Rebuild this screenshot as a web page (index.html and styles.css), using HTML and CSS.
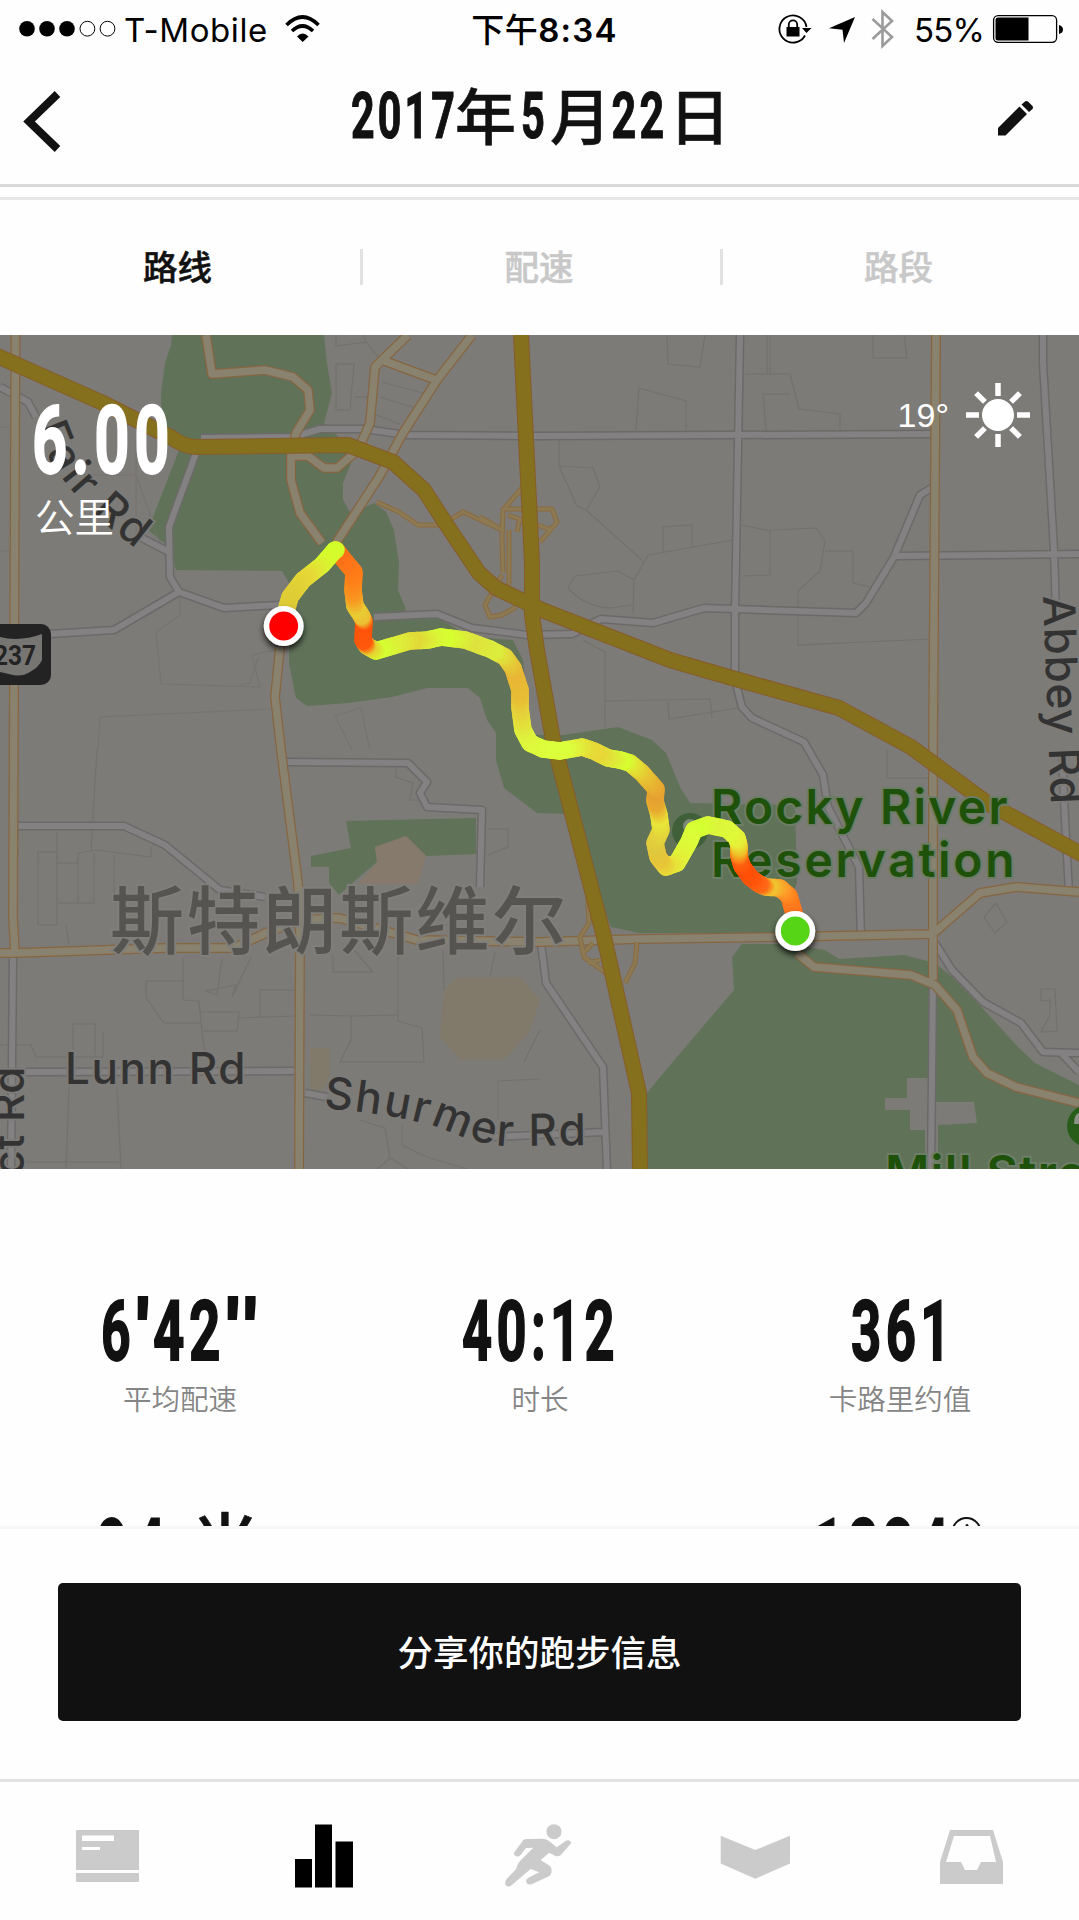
FILE: index.html
```html
<!DOCTYPE html>
<html lang="zh-CN">
<head>
<meta charset="utf-8">
<title>2017年5月22日</title>
<link rel="stylesheet" href="styles.css">
</head>
<body>
<div class="app">
  <header class="top">
    <div class="status">
      <div class="status-left">
        <svg class="signal" viewBox="18 20 98 18"><g><circle cx="27" cy="28.7" r="7.8"/><circle cx="47" cy="28.7" r="7.8"/><circle cx="67" cy="28.7" r="7.8"/></g><g fill="none" stroke="#000"><circle cx="87.4" cy="28.7" r="7.4"/><circle cx="107.5" cy="28.7" r="7.4"/></g></svg>
        <span class="carrier">T-Mobile</span>
        <svg class="wifi" viewBox="284 14 37 29"><g fill="none" stroke="#000" stroke-width="3.6"><path d="M286.500 25Q302.500 9 318.500 25"/><path d="M292 31Q302.500 21 313 31"/></g><path d="M297 36.500Q302.500 30.500 308.500 36.500L302.700 42z"/></svg>
      </div>
      <div class="clock">下午<b>8:34</b></div>
      <div class="status-right">
        <svg class="status-icons" viewBox="778 8 118 42">
          <g fill="none" stroke="#000" stroke-width="1.8"><path d="M805 35.500A13.600 13.600 0 1 1 806.500 27"/><path d="M788.800 28v-3.500a4.200 4.200 0 0 1 8.400 0V28"/></g>
          <path d="M786.500 27h13v9.500h-13zM802 28h9.500L806.500 33z"/>
          <path d="M855 17L829 28.300L842.500 29.800L844 43z"/>
          <path d="M872.500 19L892 37L882.500 46V12L892 21L872.500 39" fill="none" stroke="#9b9b9b" stroke-width="2.600"/>
        </svg>
        <span class="percent">55%</span>
        <svg class="battery" viewBox="992 14 73 30"><rect x="993.600" y="15.700" width="63" height="26.600" rx="4.500" fill="none" stroke="#000" stroke-width="1.300"/><path d="M998 17.500h30.500v23H998q-2.500 0-2.500-2.500V20q0-2.500 2.500-2.500zM1059 25q4 1 4 4.500t-4 4.500z"/></svg>
      </div>
    </div>
    <div class="titlebar">
      <svg class="back" viewBox="20 88 46 66"><path d="M57.500 94L29 121.500L57.500 149" fill="none" stroke="#111" stroke-width="8"/></svg>
      <svg class="title" viewBox="340 80 400 74">
        <g class="num small"><text x="351" y="138" textLength="107" lengthAdjust="spacingAndGlyphs" font-size="65">2017</text><text x="521" y="138" textLength="27" lengthAdjust="spacingAndGlyphs" font-size="65">5</text><text x="611.500" y="138" textLength="56" lengthAdjust="spacingAndGlyphs" font-size="65">22</text></g>
        <g class="cjk" font-size="61"><text x="455" y="140">年</text><text x="550" y="140">月</text><text x="669" y="140">日</text></g>
      </svg>
      <svg class="edit" viewBox="994 98 42 40"><path d="M998 135.500v-7.500L1019.500 106.500L1027 114L1005.500 135.500zM1021.500 104.500L1025 101.500q1.500-1 3 0L1032.500 106q1 1.500 0 3L1029 112z" fill="#111"/></svg>
    </div>
  </header>
  <nav class="tabs">
    <a class="tab active">路线</a>
    <a class="tab">配速</a>
    <a class="tab">路段</a>
  </nav>
  <section class="map">
    <svg class="map-canvas" viewBox="0 335 1079 835">
      <g fill="#607359">
        <path d="M172 335L171 345L165 363L161 393L162 427L179 450L148 530L169 547L176 570L282 571L289 583L289 663L296 698L307 706L348 703L392 697L427 688L468 688L480 698L487 720L496 733L496 760L504 788L537 813L566 814L611 927L639 933H775L797 883L795 805L690 803L680 787L666 753L652 740L618 727L563 735L530 735L523 660L513 640L472 637L437 618H406L405 607L398 590L399 563L394 530L386 512L374 503L351 514L343 500V483L355 453L324 423L332 393L327 363L324 335z"/>
        <path d="M346 821L476 818V854L426 856L406 836L375 847L377 862L358 878L339 895L329 883V867H311V856L351 848z"/>
        <path d="M742 944L732 957L734 990L660 1077L647 1093V1170H1079V1085L1035 1063L1018 1047L987 1013L952 977L935 963L904 955L839 959L825 950L790 944z"/>
      </g>
      <path fill="#7d7b77" d="M907 1078H930V1102H974L977 1123L938 1125V1170H925V1130H910V1110H885V1098H907z"/>
      <path fill="#857a6b" d="M406 836L426 856L418 884H358L377 862L375 847z"/>
      <path fill="#817969" d="M456 978L520 977L540 1000L529 1033L503 1060H461L440 1037L444 990zM310 1048H330V1075L322 1090H310z"/>
      <g class="plots">
        <path d="M336 335V346L366 342L364 335M336 364H354L350 410H336zM366 342L378 357M382 382L430 395M380 397L415 408M376 415L400 424M354 397H368"/>
        <path d="M0 427H15M0 551H15M136 440V545M75 475H136L180 600V615L156 632L161 684L260 687L252 655L282 648M258 658L250 683L236 686M98 750L100 717L270 709M335 716L361 708L370 750M335 716L352 750" opacity=".7"/>
        <path d="M667 335L668 364L700 367L705 335M636 430L639 388L686 401V430M767 335V374M770 335V374M745 374H790L799 409L840 414V430M790 394H763L766 430M873 335V358H907L904 335M559 440V466L577 506L586 510L600 487L593 468L559 466M586 510L643 561M742 525L770 531V575L742 576M770 530L816 528L825 541L820 571L798 591V645L930 639M825 551H853V583L870 587M633 613L634 580L648 555L733 540M663 551V527L692 525V547M632 605L611 608Q585 607 568 588L575 576L618 571L634 580M583 640L605 652V727M605 701L710 699L712 718M668 702L669 719L738 708M887 750V778H933"/>
        <path d="M97 750L91 850M57 832V925H38V852H57M57 863H78V853L97 850L151 857V847M78 863V903M94 853V903H57M114 855V903M69 945L66 925M183 958V1000M146 998V981H183M146 998L164 1023H201L199 1001L183 1000M200 1012H239L237 1031H203M201 1023L205 1055M0 1045H31L36 1057H103V1032M73 1050V1024H95V1055M260 1016V990H295M237 1018L295 1016M222 958L217 995L206 991L236 985L232 997L251 957M69 1087L66 1170M117 1087L121 1170M26 1162H121M398 950V1021L422 1028L424 1062H340L351 1040V1016L310 1015M351 1016L398 1015M333 955V972H373L354 950M443 950L444 990M495 952L490 977M488 829H508V847L488 855M497 1081L540 1079M498 1082V1120M524 1062L540 1030M360 1120L385 1128L390 1158L376 1170M402 1125V1145L427 1157L470 1170M390 1158L410 1170M396 765V777L413 783L410 800H425"/>
        <path d="M996 903L984 917L995 933L1007 922zM1041 989H1055L1057 1031L1041 1032L1050 1015V1000L1041 1001z"/>
      </g>
      <defs>
        <path id="gray" d="M0 387L28 402L36 417M140 537L169 552M196 453L169 527L170 577L179 592L224 608L279 605M179 592L114 630L50 634M201 438L293 437L320 429H365L406 435L540 436L938 434M374 617L437 614L472 628L527 635L572 634L601 619L653 623L704 608L856 613L866 603L894 557L920 495L935 486M894 556L1079 554M740 335L735 613V680L742 707L752 718L804 742L823 775L828 807L859 867L861 938M1043 335V363L1054 550L1056 613M1062 750L1064 800L1069 893M287 762L408 763L427 782L420 793L427 807L482 810L480 887M17 826H124L165 845L220 890L265 897M13 957L11 1170M26 1072L294 1071M305 1093L327 1097M490 1137L604 1132M541 943L546 983L603 1067L607 1170M935 943L952 970L983 1002L1021 1023L1043 1052L1079 1053M1061 1053L1079 1072M933 980L931 1170"/>
        <path id="beige" d="M15.500 335L13 917L15 953M0 953H15L165 948H234L268 932L300 920L339 918L389 932L417 940L540 942L639 939L780 937L931 934M206 335L212 374L265 370L293 377L308 390L310 410L296 433L291 453V480L300 513L322 543M291 456H308L324 468H337L358 450L370 423L375 367L382 360L408 335M382 360L436 380M472 335L437 380L403 433L379 477L336 543M280 647L275 697L281 750L298 883L300 935L299 1170M936 335L933 750V980M935 932L980 893L1016 887L1079 892M797 953L814 967L911 975L935 985L957 1010L973 1057L987 1073L1016 1087L1079 1103"/>
        <path id="ramp" d="M377 502L399 512L418 525H441L463 512L502 530M480 517L502 530M522 488L503 510L502 540L503 573M509 530L509 585M503 509H552L557 522L540 542M552 530L508 515M517 532L520 518M502 575L485 605L490 617L502 615L516 607M587 883L589 923L580 937L584 957L606 973M637 942L635 963L625 983M584 952L593 943M600 960L588 963"/>
        <path id="highway" d="M-5 355L103 403L172 438Q185 447 196 447L348 445L393 462L424 490L448 527L479 573L496 588L542 610L670 660L732 678L839 708L911 747L987 803L1085 856M521 335L532 563V615L537 650L553 740L604 937L639 1093L640 1172"/>
      </defs>
      <use href="#gray" class="gray-case"/><use href="#gray" class="gray-fill"/>
      <use href="#beige" class="beige-case"/><use href="#beige" class="beige-fill"/>
      <use href="#ramp" class="ramp-case"/><use href="#ramp" class="ramp-fill"/>
      <use href="#highway" class="highway-case"/><use href="#highway" class="highway-fill"/>

      <rect x="-12" y="624" width="63" height="61" rx="10" fill="#232323"/>
      <path d="M0 637Q20 642 42 634V660Q39 667 30 672Q22 677 13 675L0 672z" fill="#777572"/>
      <text class="shield" x="-6" y="665" textLength="42" lengthAdjust="spacingAndGlyphs">237</text>

      <g class="road-label">
        <path id="fair" d="M36 428Q54 492 152 560" fill="none" stroke="none"/>
        <text><textPath href="#fair" textLength="160">Fair Rd</textPath></text>
        <text x="65" y="1084" textLength="181">Lunn Rd</text>
        <path id="shurmer" d="M323 1108Q395 1114 440 1128Q478 1144 505 1146L600 1145" fill="none" stroke="none"/>
        <text><textPath href="#shurmer" textLength="268">Shurmer Rd</textPath></text>
        <text transform="translate(1043 596) rotate(87.800)" textLength="209">Abbey Rd</text>
        <text transform="translate(24 1066) rotate(-90)" text-anchor="end">Prospect Rd</text>
      </g>
      <text class="city" x="110" y="948" textLength="456">斯特朗斯维尔</text>
      <circle cx="690" cy="831" r="18" fill="#40603a"/><circle cx="690" cy="826" r="7" fill="#7d8a79"/>
      <circle cx="1088" cy="1126" r="21" fill="#285c19"/><path d="M1074 1124q0-11 6-11v11z" fill="#8a9385"/>
      <g class="park-label">
        <text x="711" y="824" textLength="298">Rocky River</text>
        <text x="711" y="877" textLength="305">Reservation</text>
        <text x="885" y="1190">Mill Stream</text>
      </g>
      <g id="route"></g>
      <defs><filter id="shadow" x="-50%" y="-50%" width="200%" height="200%"><feDropShadow dx="0" dy="4" stdDeviation="3" flood-color="#000" flood-opacity=".8"/></filter></defs>
      <g stroke="#fff" stroke-width="5.500" filter="url(#shadow)"><circle cx="283.700" cy="626" r="17.200" fill="#f00"/><circle cx="795.300" cy="931" r="17.200" fill="#55d516"/></g>
    </svg>
    <div class="distance">
      <svg viewBox="30 400 146 80" class="distance-value"><text class="num white" x="32" y="473" font-size="94" textLength="142" lengthAdjust="spacingAndGlyphs">6.00</text></svg>
      <span class="distance-unit">公里</span>
    </div>
    <div class="weather">
      <span>19°</span>
      <svg viewBox="-33 -33 66 66"><circle r="16" fill="#fff"/><g stroke="#fff" stroke-width="5.500"><path d="M0-32V-19M0 19V32M-32 0H-19M19 0H32"/><path d="M0-31V-18.500M0 18.500V31M-31 0H-18.500M18.500 0H31" transform="rotate(45)"/></g></svg>
    </div>
  </section>
  <section class="stats">
    <div class="stat"><svg viewBox="0 0 360 70"><g class="num" font-size="84"><text x="101" y="65" textLength="34" lengthAdjust="spacingAndGlyphs">6</text><text x="136" y="65">'</text><text x="153" y="65" textLength="72" lengthAdjust="spacingAndGlyphs">42</text><text x="226" y="65">'</text><text x="243.500" y="65">'</text></g></svg><span>平均配速</span></div>
    <div class="stat"><svg viewBox="0 0 360 70"><text class="num" x="102" y="65" font-size="84" textLength="157" lengthAdjust="spacingAndGlyphs">40:12</text></svg><span>时长</span></div>
    <div class="stat"><svg viewBox="0 0 360 70"><text class="num" x="131" y="65" font-size="84" textLength="104" lengthAdjust="spacingAndGlyphs">361</text></svg><span>卡路里约值</span></div>
    <div class="stat"><svg viewBox="0 0 360 70"><text class="num" x="96" y="78" font-size="84" textLength="74" lengthAdjust="spacingAndGlyphs">94</text><text class="cjk" x="192" y="68" font-size="66">米</text></svg></div>
    <div class="stat"></div>
    <div class="stat"><svg viewBox="0 0 360 70"><text class="num" x="93" y="78" font-size="84" textLength="140" lengthAdjust="spacingAndGlyphs">1234</text><circle cx="246.500" cy="32" r="14" fill="none" stroke="#111" stroke-width="2"/><circle cx="247" cy="25.500" r="1.500" fill="#111"/></svg></div>
  </section>
  <footer class="share"><button>分享你的跑步信息</button></footer>
  <nav class="bottom">
    <svg viewBox="72 1820 72 72"><path d="M76 1831q0-1 1-1H139v40H76zM76 1873H139v8q0 1-1 1H77q-1 0-1-1z"/><path fill="#fff" d="M82 1835.500h32v5.500H82zM82 1847h18v3H82z"/></svg>
    <svg class="on" viewBox="288 1820 72 72"><path d="M295 1859h17v28.500h-17zM315 1824.500h17v63h-17zM335.500 1841.500h17.500v46h-17.500z"/></svg>
    <svg viewBox="503 1820 72 72"><g transform="translate(490 1810) scale(.3333)"><circle cx="192" cy="65" r="22.500"/><path d="M100 90Q104 87 112 87L155 86Q170 86 180 95L200 112L228 92Q240 87 244 99L212 136Q203 141 195 137L178 128L152 150L180 168Q190 180 180 197L125 223Q110 226 108 213Q108 207 115 203L148 187L122 177L62 228Q48 234 45 220Q46 212 50 207L78 178Q82 160 95 148L130 113L108 114L90 137Q76 145 71 130z"/></g></svg>
    <svg viewBox="719 1820 72 72"><path d="M720.700 1835.700L755.300 1850L790 1835.700V1863.500L755.300 1878.700L720.700 1863.500z"/></svg>
    <svg viewBox="935 1820 72 72"><path fill-rule="evenodd" d="M950 1830H993L1003 1862V1884H940V1862zM954 1836L946 1862H961L965 1870H977L981 1862H996L990 1836z"/></svg>
  </nav>
</div>
<script src="route.js"></script>
</body>
</html>
```
FILE: route.js
```js
// Track points: x, y and pace colour, from start to finish.
const track = [
  [795,925,255,110,24],[794,913,255,115,26],[789,896,255,122,28],[780,888,255,150,40],[766,887,240,196,48],[759,884,255,110,24],
  [750,877,255,86,12],[742,866,255,78,6],[739,856,255,96,16],[739,846,240,190,40],[737,838,232,236,56],[727,829,222,250,56],[708,825,220,245,60],
  [694,830,212,255,48],[689,842,218,255,56],[677,863,225,242,56],[666,867,232,224,56],[658,857,232,196,56],[655,843,224,200,60],
  [661,830,226,210,60],[659,815,232,230,56],[655,801,232,170,48],[656,789,230,160,48],[642,773,232,190,50],[630,763,226,225,52],
  [620,760,214,255,48],[608,758,222,235,56],[594,751,232,214,56],[582,747,230,222,56],[560,751,220,255,60],[543,749,220,255,60],[530,743,222,250,60],
  [523,730,222,244,60],[520,708,228,214,58],[520,690,232,190,52],[513,668,232,182,52],[505,657,228,205,56],[490,649,220,238,60],
  [465,640,222,226,60],[441,637,214,255,48],[428,640,218,244,54],[410,641,226,216,56],[389,647,220,240,56],[376,651,212,255,48],
  [367,646,230,210,48],[363,640,255,90,14],[364,621,255,82,10],[361,615,236,190,50],[355,606,232,205,52],[353,590,248,150,32],
  [354,572,255,128,24],[344,560,255,118,24],[336,550,255,112,24],[335,550,208,255,40],[322,565,214,250,46],[303,580,230,216,54],
  [290,597,224,206,54],[285,615,222,204,54]
];
const layer = document.getElementById('route');
for (let i = 1; i < track.length; i++) {
  const a = track[i - 1], b = track[i], steps = i === 53 ? 1 : 5;
  for (let s = 0; s < steps; s++) {
    const at = (k, t) => a[k] + (b[k] - a[k]) * t;
    const u = s / steps, v = (s + 1) / steps;
    const line = document.createElementNS('http://www.w3.org/2000/svg', 'line');
    line.setAttribute('x1', at(0, u)); line.setAttribute('y1', at(1, u));
    line.setAttribute('x2', at(0, v)); line.setAttribute('y2', at(1, v));
    line.setAttribute('stroke', `rgb(${at(2, v)} ${at(3, v)} ${at(4, v)})`);
    layer.appendChild(line);
  }
}
```
FILE: styles.css
```css
* { box-sizing: border-box; }
body { margin: 0; background: #fff; color: #111; font-family: Inter, "Noto Sans CJK SC", sans-serif; }
svg { display: block; }
.app { width: 1079px; height: 1920px; display: flex; flex-direction: column; overflow: hidden; background: #fefefe; }

.num { font-family: Roboto, sans-serif; font-weight: 700; fill: #111; stroke: #111; stroke-width: 1.8; letter-spacing: 7px; }
.num.small { stroke-width: 1.2; letter-spacing: 5px; }
.num.white { fill: #fff; stroke: #fff; }
.cjk { font-family: "Noto Sans CJK SC", sans-serif; font-weight: 500; fill: #111; stroke: #111; stroke-width: .6; }

.top { height: 187px; border-bottom: 3px solid #d9d9d9; display: flex; flex-direction: column; }
.status { height: 60px; display: grid; grid-template-columns: 1fr auto 1fr; color: #000; font-size: 33px; line-height: 60px; }
.status-left, .status-right { display: flex; align-items: center; }
.status-left { padding-left: 18px; }
.signal { width: 98px; height: 18px; margin-bottom: 2px; }
.carrier { width: 141px; margin-left: 8px; letter-spacing: .6px; white-space: nowrap; }
.wifi { width: 37px; height: 29px; margin-left: 19px; margin-bottom: 3px; }
.clock { margin-left: 10px; font-weight: 500; letter-spacing: .5px; white-space: nowrap; }
.clock b { font-weight: 600; letter-spacing: 1.2px; }
.status-right { justify-content: flex-end; padding-right: 14px; }
.status-icons { width: 118px; height: 42px; margin-bottom: 2px; }
.percent { width: 70px; margin: 0 8px 0 18px; letter-spacing: -.8px; }
.battery { width: 73px; height: 30px; margin-bottom: 2px; }
.titlebar { flex: 1; display: flex; align-items: flex-start; justify-content: space-between; padding: 20px 43px 0 20px; }
.back { width: 46px; height: 66px; margin-top: 8px; }
.title { width: 400px; height: 74px; margin-left: 20px; overflow: visible; }
.edit { width: 42px; height: 40px; margin-top: 18px; }

.tabs { flex: none; height: 138px; margin-top: 10px; border-top: 3px solid #e6e6e6; display: grid; grid-template-columns: 360px 360px 359px; align-items: center; }
.tab { height: 36px; line-height: 38px; margin-top: -2px; padding-right: 5px; text-align: center; font-size: 34.5px; font-weight: 500; color: #c8c8c8; -webkit-text-stroke: .5px currentColor; }
.tab + .tab { border-left: 3px solid #e2e2e2; }
.tab.active { color: #111; }

.map { flex: none; height: 834px; position: relative; overflow: hidden; background: #7d7b77; }
.map-canvas { width: 1079px; height: 835px; }
.map-canvas use { fill: none; stroke-linejoin: round; }
.plots { fill: none; stroke: #73716e; stroke-width: 1.2; }
.gray-case { stroke: #6c6a69; stroke-width: 9; }
.gray-fill { stroke: #838182; stroke-width: 6; }
.beige-case { stroke: #876540; stroke-width: 10; }
.beige-fill { stroke: #89826f; stroke-width: 7.5; }
.ramp-case { stroke: #8b6a3f; stroke-width: 5; }
.ramp-fill { stroke: #8b7a54; stroke-width: 3; }
.highway-case { stroke: #875c2b; stroke-width: 16; }
.highway-fill { stroke: #84701d; stroke-width: 14; }
.shield { font: 700 28px Roboto, sans-serif; fill: #232323; }
.road-label { font: 450 44px Inter, sans-serif; fill: #333; stroke: #7d7b77; stroke-width: 4; paint-order: stroke; letter-spacing: .5px; }
.city { font: 500 74px "Noto Sans CJK SC", sans-serif; fill: #565450; stroke: #807e7a; stroke-width: 4; paint-order: stroke; }
.park-label { font: 600 48px Inter, sans-serif; fill: #1e520b; stroke: #6d7d66; stroke-width: 4; paint-order: stroke; letter-spacing: 1.5px; }
#route { stroke-width: 17.5; stroke-linecap: round; }

.distance { position: absolute; left: 30px; top: 65px; color: #fff; }
.distance-value { width: 146px; height: 80px; overflow: visible; }
.distance-unit { display: block; margin: 10px 0 0 5px; font-size: 39.5px; line-height: 56px; font-weight: 350; }
.weather { position: absolute; right: 48px; top: 47px; display: flex; align-items: center; gap: 16px; color: #fff; font: 34px "Liberation Sans", sans-serif; }
.weather svg { width: 66px; height: 66px; }

.stats { flex: none; height: 357px; padding-top: 126px; display: grid; grid-template-columns: repeat(3, 360px); grid-template-rows: 205px 70px; overflow: hidden; }
.stat svg { width: 360px; height: 70px; overflow: visible; }
.stat span { display: block; text-align: center; font-size: 28.5px; line-height: 40px; font-weight: 350; color: #858585; margin-top: 15px; }

.share { flex: none; height: 253px; border-top: 3px solid #f7f7f7; padding: 54px 58px 0; background: #fefefe; }
.share button { width: 963px; height: 138px; border: 0; border-radius: 5px; background: #111; color: #fff; font: 500 35.5px/136px "Noto Sans CJK SC", sans-serif; padding: 0 0 2px; }
.bottom { flex: none; height: 141px; border-top: 3px solid #e2e2e2; display: grid; grid-template-columns: repeat(5, 1fr); justify-items: center; padding-top: 38px; }
.bottom svg { width: 72px; height: 72px; fill: #cbcbcb; }
.bottom .on { fill: #000; }
```
